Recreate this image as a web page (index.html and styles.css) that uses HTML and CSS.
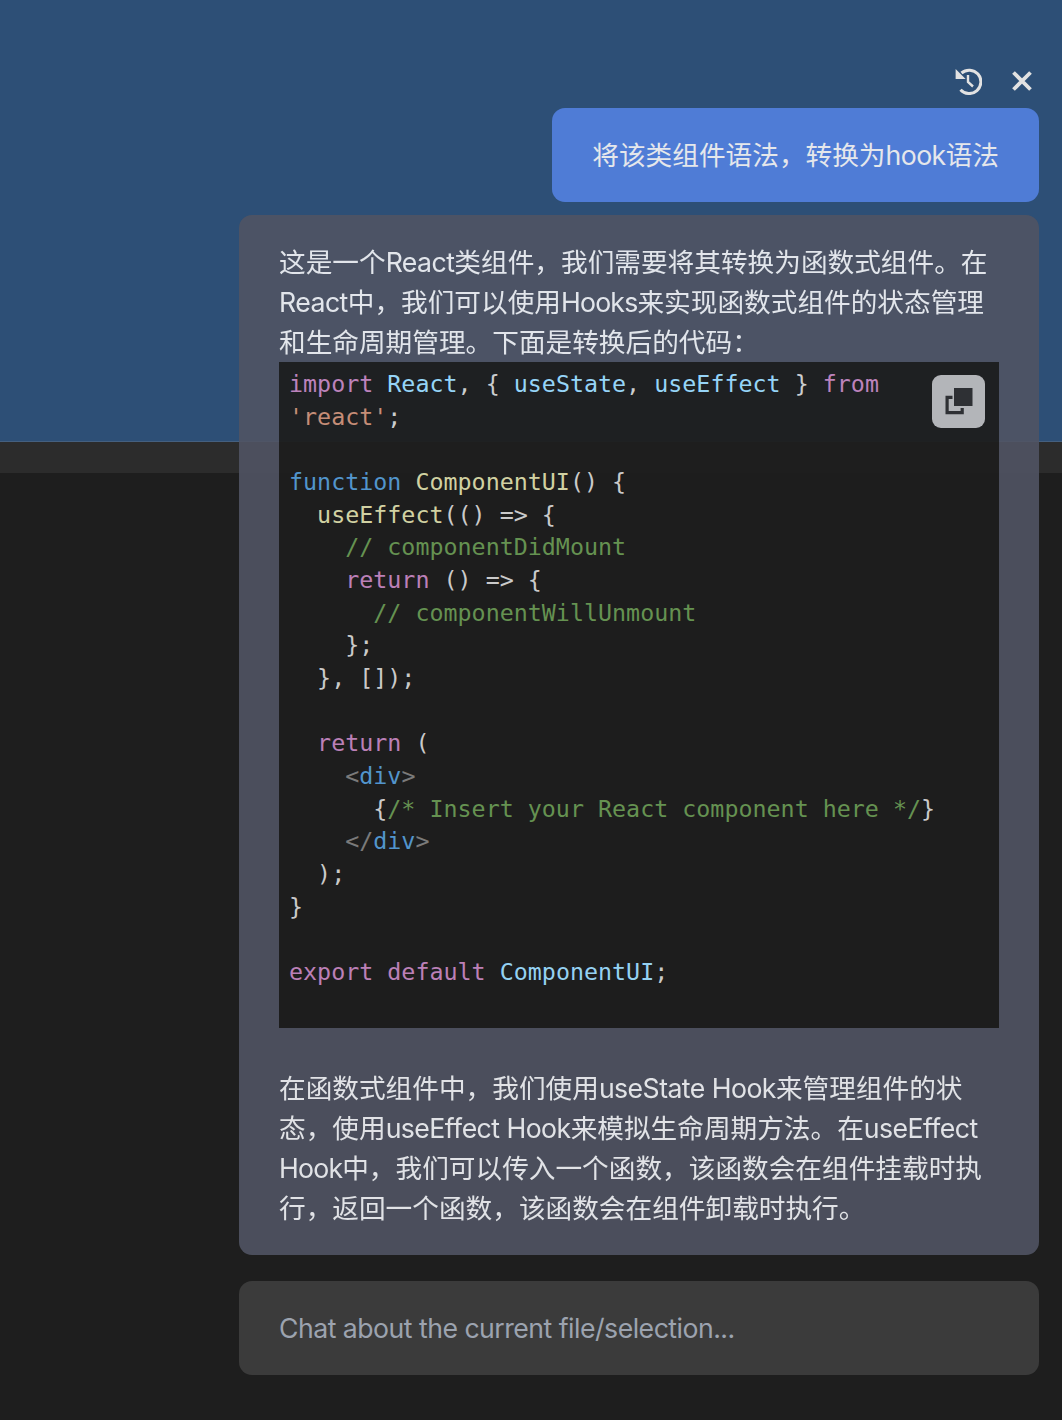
FILE: index.html
```html
<!DOCTYPE html>
<html lang="zh-CN">
<head>
<meta charset="utf-8">
<title>Chat</title>
<link rel="stylesheet" href="styles.css">
</head>
<body>
<div class="backdrop">
  <div class="backdrop-blue"></div>
  <div class="backdrop-strip"></div>
  <div class="backdrop-dark"></div>
</div>
<main class="chat">
  <div class="toolbar">
    <svg class="icon-history" viewBox="0 0 28 28" width="28" height="28" aria-hidden="true">
      <path d="M7.5 6A11.7 11.7 0 1 1 6.5 22.7" fill="none" stroke="#e2e2e2" stroke-width="3"/>
      <path d="M1.6 2v10h10z" fill="#e2e2e2"/>
      <path d="M14 8v7l5 4.5" fill="none" stroke="#e2e2e2" stroke-width="2.4"/>
    </svg>
    <svg class="icon-close" viewBox="0 0 22 22" width="22" height="22" aria-hidden="true">
      <path d="M2.5 2.5l17 17M19.5 2.5l-17 17" fill="none" stroke="#e2e2e2" stroke-width="3.8"/>
    </svg>
  </div>
  <div class="user-row">
    <div class="user-msg">将该类组件语法，转换为<span class="lat">hook</span>语法</div>
  </div>
  <section class="reply">
    <p class="reply-text">这是一个<span class="lat">React</span>类组件，我们需要将其转换为函数式组件。在<span class="lat">React</span>中，我们可以使用<span class="lat tight">Hooks</span>来实现函数式组件的状态管理和生命周期管理。下面是转换后的代码：</p>
    <div class="code-block">
      <button class="copy-btn" type="button" aria-label="copy">
        <svg viewBox="0 0 28 28" width="28" height="28" aria-hidden="true">
          <rect x="9" y="0" width="18.5" height="18" fill="#2f2f31"/>
          <path d="M7.5 9.3H2.1V24.6H17.2V20" fill="none" stroke="#2f2f31" stroke-width="3.2"/>
        </svg>
      </button>
<pre class="code"><code><span class="k">import</span> <span class="v">React</span>, { <span class="v">useState</span>, <span class="v">useEffect</span> } <span class="k">from</span> <span class="s">'react'</span>;

<span class="b">function</span> <span class="f">ComponentUI</span>() {
  <span class="f">useEffect</span>(() <span class="b2">=&gt;</span> {
    <span class="c">// componentDidMount</span>
    <span class="k">return</span> () <span class="b2">=&gt;</span> {
      <span class="c">// componentWillUnmount</span>
    };
  }, []);

  <span class="k">return</span> (
    <span class="t">&lt;</span><span class="b">div</span><span class="t">&gt;</span>
      {<span class="c">/* Insert your React component here */</span>}
    <span class="t">&lt;/</span><span class="b">div</span><span class="t">&gt;</span>
  );
}

<span class="k">export</span> <span class="k">default</span> <span class="v">ComponentUI</span>;

</code></pre>
    </div>
    <p class="reply-text reply-after">在函数式组件中，我们使用<span class="lat">useState Hook</span>来管理组件的状态，使用<span class="lat">useEffect Hook</span>来模拟生命周期方法。在<span class="lat">useEffect</span> <span class="lat tight">Hook</span>中，我们可以传入一个函数，该函数会在组件挂载时执行，返回一个函数，该函数会在组件卸载时执行。</p>
  </section>
  <div class="input">Chat about the current file/selection...</div>
</main>
</body>
</html>
```
FILE: styles.css
```css
* { box-sizing: border-box; }
html, body { margin: 0; padding: 0; height: 100%; }
body {
  position: relative;
  width: 1062px;
  height: 1420px;
  overflow: hidden;
  background: #1e1e1e;
  font-family: Inter, "Noto Sans CJK SC", sans-serif;
}
.backdrop { display: flex; flex-direction: column; height: 100%; }
.backdrop-blue { height: 441px; background: #2d4f76; border-bottom: 1px solid #45607f; box-sizing: content-box; }
.backdrop-strip { height: 31px; background: #2c2c2c; }
.backdrop-dark { flex: 1; background: #1e1e1e; }
.chat {
  position: absolute;
  left: 239px;
  top: 0;
  width: 800px;
  display: flex;
  flex-direction: column;
}
.toolbar {
  height: 108px;
  display: flex;
  justify-content: flex-end;
  align-items: flex-start;
  gap: 29px;
  padding: 67px 6px 0 0;
}
.icon-close { margin-top: 3px; }
.user-row { display: flex; justify-content: flex-end; }
.user-msg {
  background: #4f7cd6;
  color: #e5e7eb;
  border-radius: 13px;
  padding: 27px 40px;
  font-size: 26.67px;
  line-height: 40px;
}
.lat { letter-spacing: -0.55px; }
.lat.tight { letter-spacing: -0.8px; }
.reply {
  margin-top: 13px;
  background: rgba(80, 84, 99, 0.95);
  opacity: 0.95;
  border-radius: 13px;
  padding: 27px 40px;
  color: #eceef2;
  font-size: 26.67px;
  line-height: 40px;
}
.reply-text { margin: 0; }
.reply-after { margin-top: 40px; }
.code-block { position: relative; background: #1e1e1e; }
.code {
  margin: 0;
  padding: 6px 10px 7px;
  font-family: "DejaVu Sans Mono", monospace;
  font-size: 23.33px;
  line-height: 32.67px;
  color: #d4d4d4;
  white-space: pre-wrap;
}
.copy-btn {
  position: absolute;
  top: 13px;
  right: 14px;
  width: 53px;
  height: 53px;
  padding: 0;
  border: 0;
  border-radius: 9px;
  background: #bbbbbd;
  display: flex;
  align-items: center;
  justify-content: center;
}
.k { color: #c586c0; }
.v { color: #9cdcfe; }
.s { color: #ce9178; }
.b { color: #569cd6; }
.b2 { color: #d4d4d4; }
.f { color: #dcdcaa; }
.c { color: #6a9955; }
.t { color: #808080; }
.input {
  margin-top: 26px;
  height: 94px;
  background: #3b3b3b;
  border-radius: 13px;
  padding: 27px 40px;
  color: #9ca3af;
  font-size: 26.67px;
  line-height: 40px;
  letter-spacing: -0.52px;
}
```
